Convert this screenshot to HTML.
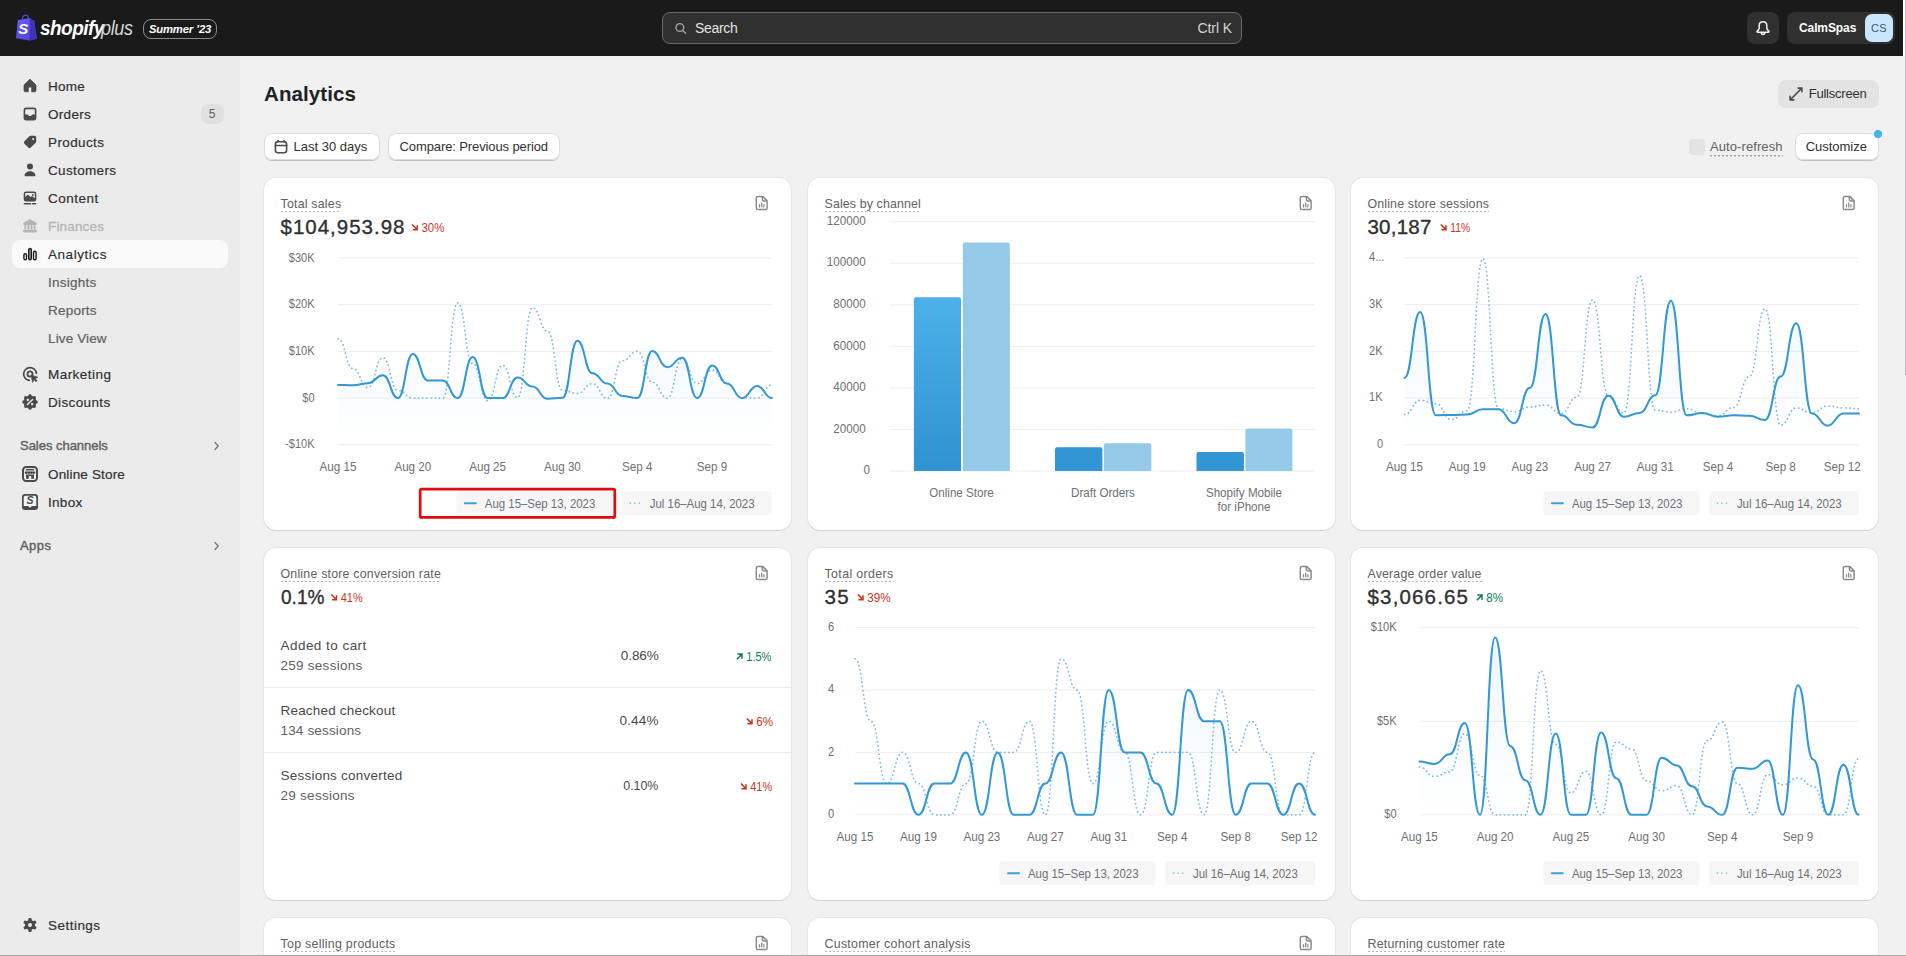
<!DOCTYPE html>
<html lang="en">
<head>
<meta charset="utf-8">
<title>Analytics</title>
<style>
*{box-sizing:border-box;margin:0;padding:0}
html,body{width:1906px;height:956px;overflow:hidden;background:#f1f1f1}
body{font-family:"Liberation Sans",Arial,sans-serif;color:#303030;font-size:14px;position:relative;-webkit-font-smoothing:antialiased}
#top{position:absolute;left:0;top:0;width:1903px;height:56px;background:#1a1a1a}
#side{position:absolute;left:0;top:56px;width:240px;height:900px;background:#ebebeb}
#sb1{position:absolute;left:1903px;top:0;width:3px;height:56px;background:#fff}
#sb2{position:absolute;left:1904.6px;top:0;width:1.4px;height:375px;background:#bdbdbd}
#bline{position:absolute;left:0;top:954.600px;width:1906px;height:1.400px;background:#a6a6a6}
.abs{position:absolute;white-space:nowrap}
/* top bar */
#logo-s{position:absolute;left:40px;top:16px;font-size:21px;font-weight:bold;font-style:italic;color:#fff;line-height:24px;transform-origin:0 50%;transform:scaleX(0.905);letter-spacing:-0.6px}
#logo-p{position:absolute;left:100.8px;top:16px;font-size:21px;font-weight:normal;font-style:italic;color:#d6d6d6;line-height:24px;transform-origin:0 50%;transform:scaleX(0.86);letter-spacing:-0.4px}
#pill{position:absolute;left:143px;top:19px;width:74px;height:20px;border:1px solid #8a8a8a;border-radius:8px;color:#fff;font-size:11.3px;font-weight:bold;font-style:italic;line-height:18px;text-align:center}
#search{position:absolute;left:662px;top:12px;width:580px;height:32px;border:1px solid #6a6a6a;border-radius:8px;background:#303030}
#search .ph{position:absolute;left:32px;top:0;line-height:31px;font-size:14px;color:#e3e3e3}
#search .kb{position:absolute;right:9px;top:0;line-height:30px;font-size:14px;color:#d4d4d4}
#bell{position:absolute;left:1747px;top:12px;width:32px;height:32px;border-radius:8px;background:#303030}
#acct{position:absolute;left:1787px;top:12px;width:108px;height:32px;border-radius:8px;background:#303030}
#acct .nm{position:absolute;left:12px;top:0.3px;line-height:32px;font-size:12px;font-weight:bold;color:#fff;letter-spacing:-0.1px}
#acct .av{position:absolute;left:78px;top:2px;width:28px;height:28px;border-radius:7px;background:#c9e6ff;color:#3d566e;font-size:11px;line-height:29px;text-align:center;letter-spacing:0.3px}
/* sidebar */
.nav{position:absolute;left:48px;font-size:13.5px;font-weight:normal;color:#303030;line-height:21px;white-space:nowrap;-webkit-text-stroke:0.18px #303030}
.nav.sub{color:#616161;-webkit-text-stroke:0.2px #616161}
.nav.dis{color:#b5b5b5;-webkit-text-stroke:0.3px #b5b5b5}
.sec{position:absolute;left:20px;font-size:13px;color:#616161;line-height:20px;-webkit-text-stroke:0.4px #616161}
.nico{position:absolute;left:20px;width:20px;height:20px}
#sel{position:absolute;left:12px;top:184px;width:216px;height:28px;border-radius:8px;background:#fafafa}
#badge{position:absolute;left:200.500px;top:48px;width:23px;height:20px;border-radius:8px;background:#e0e0e0;color:#616161;font-size:12px;line-height:20px;text-align:center}
/* main */
#title{position:absolute;left:264px;top:80px;font-size:20.5px;font-weight:bold;color:#1f2124;line-height:28px;letter-spacing:0.1px}
.btn{position:absolute;height:27px;top:133px;background:#fff;border-radius:8px;box-shadow:0 0 0 1px #dedede inset,0 1px 0 0 #c4c4c4;font-size:13px;line-height:27px;color:#303030;white-space:nowrap}
#fs{position:absolute;left:1778px;top:80px;width:101px;height:28px;border-radius:8px;background:#e3e3e3;font-size:13px;line-height:28px;color:#303030}
/* cards */
.card{position:absolute;width:527px;background:#fff;border-radius:12px;box-shadow:0 1px 0 0 #d4d4d4,0 0 0 1px #e6e6e6;overflow:hidden}
.ctitle{position:absolute;left:16.500px;top:16px;font-size:12.4px;line-height:20px;color:#616161;height:18px;white-space:nowrap;background:repeating-linear-gradient(90deg,#b8b8b8 0 2px,transparent 2px 4px) 0 100%/100% 1px no-repeat}
.cval{position:absolute;left:16.500px;top:36px;font-size:20.500px;line-height:26px;color:#303030;white-space:nowrap;-webkit-text-stroke:0.35px #303030}
.ricon{position:absolute;left:488.300px;top:15px;width:20px;height:20px}
.csvg{position:absolute;left:0;top:0}
.ax{font-family:"Liberation Sans",Arial,sans-serif;font-size:12.300px;fill:#6d7175;transform-box:fill-box;transform-origin:50% 50%;transform:scaleX(0.945)}
.ay{font-family:"Liberation Sans",Arial,sans-serif;font-size:12.300px;fill:#6d7175;transform-box:fill-box;transform-origin:100% 50%;transform:scaleX(0.900)}
.ayl{transform-origin:0 50%}
.ayn{transform:scaleX(0.948)}
.axe{transform-origin:100% 50%}
.lg{font-family:"Liberation Sans",Arial,sans-serif;font-size:12.300px;fill:#6d7175;transform-box:fill-box;transform-origin:0 50%;transform:scaleX(0.930)}
.trend{font-family:"Liberation Sans",Arial,sans-serif;font-size:12.300px;font-weight:normal;transform-box:fill-box;transform-origin:0 50%}
.r1{position:absolute;left:16.500px;font-size:13.5px;line-height:20px;color:#4a4a4a;white-space:nowrap;letter-spacing:0.1px}
.r2{position:absolute;left:16.500px;font-size:13.5px;line-height:20px;color:#616161;white-space:nowrap;letter-spacing:0.1px}
.r3{position:absolute;right:132.300px;font-size:13.5px;line-height:20px;color:#4a4a4a;white-space:nowrap}
/*FIT*/#n_home{letter-spacing:0.261px}#n_orders{letter-spacing:0.307px}#n_products{letter-spacing:0.374px}#n_customers{letter-spacing:0.342px}#n_content{letter-spacing:0.501px}#n_finances{letter-spacing:0.160px}#n_analytics{letter-spacing:0.546px}#n_insights{letter-spacing:0.253px}#n_reports{letter-spacing:0.220px}#n_liveview{letter-spacing:0.132px}#n_marketing{letter-spacing:0.452px}#n_discounts{letter-spacing:0.365px}#n_sc{letter-spacing:-0.029px}#n_onlinestore{letter-spacing:0.159px}#n_inbox{letter-spacing:0.292px}#n_apps{letter-spacing:0.420px}#n_settings{letter-spacing:0.474px}#t_search{letter-spacing:-0.312px}#t_kb{letter-spacing:-0.080px}#t_nm{letter-spacing:0.095px}#t_title{letter-spacing:0.105px}#t_fs{letter-spacing:-0.219px}#t_l30{letter-spacing:0.007px}#t_cmp{letter-spacing:-0.110px}#t_ar{letter-spacing:0.087px}#t_cust{letter-spacing:-0.028px}#ct1{letter-spacing:0.205px}#ct2{letter-spacing:0.122px}#ct3{letter-spacing:0.147px}#ct4{letter-spacing:0.197px}#ct5{letter-spacing:0.368px}#ct6{letter-spacing:0.147px}#ct7{letter-spacing:0.278px}#ct8{letter-spacing:0.270px}#ct9{letter-spacing:0.208px}#cv1{letter-spacing:0.998px}#cv3{letter-spacing:0.219px}#cv4{display:inline-block;transform-origin:0 50%;transform:scaleX(0.929)}#cv5{letter-spacing:1.300px}#cv6{letter-spacing:1.162px}#tr1{transform:scaleX(0.930)}#tr2{transform:scaleX(0.835)}#tr3{transform:scaleX(0.889)}#tr4{transform:scaleX(0.892)}#tr5{transform:scaleX(0.945)}#tr6{transform:scaleX(0.889)}#tr7{transform:scaleX(0.954)}#tr8{transform:scaleX(0.945)}#ra0{letter-spacing:0.458px}#rb0{letter-spacing:0.264px}#rc0{letter-spacing:-0.070px}#ra1{letter-spacing:0.191px}#rb1{letter-spacing:0.164px}#rc1{letter-spacing:0.205px}#ra2{letter-spacing:0.228px}#rb2{letter-spacing:0.271px}#rc2{display:inline-block;transform-origin:100% 50%;transform:scaleX(0.914)}#t_pill{letter-spacing:-0.185px}/*ENDFIT*/
</style>
</head>
<body>
<div id="top">
<svg class="abs" style="left:15px;top:14px" width="23" height="27" viewBox="0 0 23 27">
<defs><linearGradient id="bagg" x1="0" y1="0" x2="1" y2="1"><stop offset="0" stop-color="#6a5cff"/><stop offset="1" stop-color="#4a3fd0"/></linearGradient></defs>
<path d="M7.200 5.500c.3-2.300 1.700-4.300 3.600-4.300 1.300 0 2.200 1.100 2.600 2.800" fill="none" stroke="#5548e6" stroke-width="1.200"/>
<path d="M2.800 6.200 14.600 4l1.200.5.900 1.400 2.400.3 2.800 18.600-7.300 1.600L1 24.200z" fill="url(#bagg)"/>
<path d="M14.600 4l1.200.5.900 1.400 2.400.3 2.800 18.600-7.300 1.600z" fill="#3f35bd"/>
<text x="8.300" y="20.200" text-anchor="middle" font-family="Liberation Sans,Arial,sans-serif" font-size="15" font-weight="bold" font-style="italic" fill="#fff">S</text>
</svg>
<span id="logo-s">shopify</span><span id="logo-p">plus</span>
<div id="pill"><span id="t_pill">Summer ’23</span></div>
<div id="search"><svg style="position:absolute;left:10px;top:8px" width="16" height="16" viewBox="0 0 16 16"><circle cx="6.800" cy="6.500" r="3.900" fill="none" stroke="#a3a3a3" stroke-width="1.400"/><path d="M9.800 9.500L12.600 12.300" stroke="#a3a3a3" stroke-width="1.400" stroke-linecap="round"/></svg><span id="t_search" class="ph">Search</span><span id="t_kb" class="kb">Ctrl K</span></div>
<div id="bell"><svg class="abs" style="left:6px;top:6px" width="20" height="20" viewBox="0 0 20 20"><path d="M10 3.800c-2.200 0-3.800 1.700-3.800 3.900v2.300c0 .7-.3 1.400-.8 1.900l-1.200 1.200c-.4.400-.1 1.100.5 1.100h10.600c.6 0 .9-.7.500-1.100l-1.200-1.200c-.5-.5-.8-1.200-.8-1.900V7.700c0-2.200-1.600-3.900-3.800-3.900z" fill="none" stroke="#f3f3f3" stroke-width="1.500" stroke-linejoin="round"/><path d="M8.200 14.600a1.800 1.800 0 0 0 3.600 0" fill="none" stroke="#f3f3f3" stroke-width="1.500"/></svg></div>
<div id="acct"><span id="t_nm" class="nm">CalmSpas</span><span class="av">CS</span></div>
</div>
<div id="sb1"></div><div id="sb2"></div>
<div id="side">
<div id="sel"></div>
<svg class="nico" style="top:20px;left:20px" viewBox="0 0 20 20"><path d="M10 3.200 4.500 8.400a1.700 1.700 0 0 0-.5 1.200v4.700a1.500 1.500 0 0 0 1.500 1.500h2.800v-3.300a1.700 1.700 0 0 1 3.400 0v3.300h2.800a1.500 1.500 0 0 0 1.500-1.500V9.600a1.700 1.700 0 0 0-.5-1.200Z" fill="#4a4a4a" stroke="#4a4a4a" stroke-width="0.800" stroke-linejoin="round"/></svg>
<span id="n_home" class="nav " style="top:20px">Home</span>
<svg class="nico" style="top:48px;left:20px" viewBox="0 0 20 20"><path fill-rule="evenodd" d="M6.200 3.600h7.600a2.600 2.600 0 0 1 2.600 2.600v7.600a2.600 2.600 0 0 1-2.600 2.600H6.200a2.600 2.600 0 0 1-2.600-2.600V6.200a2.600 2.600 0 0 1 2.600-2.600zM5.200 6.400v4h2.300a.9.900 0 0 1 .8.500 1.800 1.800 0 0 0 3.400 0 .9.900 0 0 1 .8-.5h2.300v-4a1.200 1.200 0 0 0-1.200-1.200H6.400a1.200 1.200 0 0 0-1.200 1.200z" fill="#4a4a4a"/></svg>
<span id="n_orders" class="nav " style="top:48px">Orders</span>
<svg class="nico" style="top:76px;left:20px" viewBox="0 0 20 20"><path fill-rule="evenodd" d="M10.6 3.8h4.1a1.5 1.5 0 0 1 1.5 1.5v4.1a1.8 1.8 0 0 1-.53 1.27l-4.9 4.9a1.8 1.8 0 0 1-2.54 0l-3.8-3.8a1.8 1.8 0 0 1 0-2.54l4.9-4.9a1.8 1.8 0 0 1 1.27-.53zM13.1 5.9a1 1 0 1 0 0 2 1 1 0 0 0 0-2z" fill="#4a4a4a"/></svg>
<span id="n_products" class="nav " style="top:76px">Products</span>
<svg class="nico" style="top:104px;left:20px" viewBox="0 0 20 20"><circle cx="10" cy="6.6" r="3" fill="#4a4a4a"/><path d="M4.6 15.6c0-2.6 2.4-4.3 5.4-4.3s5.4 1.7 5.4 4.3a.6.6 0 0 1-.6.6H5.200a.6.6 0 0 1-.6-.6z" fill="#4a4a4a"/></svg>
<span id="n_customers" class="nav " style="top:104px">Customers</span>
<svg class="nico" style="top:132px;left:20px" viewBox="0 0 20 20"><path fill-rule="evenodd" d="M6 3.4h8a2.3 2.3 0 0 1 2.3 2.3v5.6a2.3 2.3 0 0 1-2.3 2.3H6a2.3 2.3 0 0 1-2.3-2.3V5.7A2.300 2.300 0 0 1 6 3.400zM5.200 5.900v3.200l2.100-2.100a.8.8 0 0 1 1.100 0l2.100 2.100.9-.9a.8.800 0 0 1 1.100 0l2.300 2.300V5.900a.9.900 0 0 0-.9-.9H6.100a.9.900 0 0 0-.9.900zM12.800 6a.9.900 0 1 0 0 1.800.9.900 0 0 0 0-1.800z" fill="#4a4a4a"/><path d="M4.400 15.700h6.200M12.700 15.700h2.900" stroke="#4a4a4a" stroke-width="1.500" stroke-linecap="round"/></svg>
<span id="n_content" class="nav " style="top:132px">Content</span>
<svg class="nico" style="top:160px;left:20px" viewBox="0 0 20 20"><path d="M10 3.600 3.800 7.100v1.300h12.400V7.100z" fill="#b5b5b5" stroke="#b5b5b5" stroke-width="1" stroke-linejoin="round"/><path d="M5.400 9v4.400M8.500 9v4.400M11.500 9v4.400M14.600 9v4.400" stroke="#b5b5b5" stroke-width="1.900"/><path d="M4.200 15.100h11.600" stroke="#b5b5b5" stroke-width="2.600" stroke-linecap="round"/></svg>
<span id="n_finances" class="nav dis" style="top:160px">Finances</span>
<svg class="nico" style="top:188px;left:20px" viewBox="0 0 20 20"><rect x="3.900" y="9.700" width="2.600" height="6" rx="1.300" fill="none" stroke="#1a1a1a" stroke-width="1.400"/><rect x="8.700" y="4.500" width="2.600" height="11.200" rx="1.300" fill="#ababab" stroke="#1a1a1a" stroke-width="1.400"/><rect x="13.500" y="7.300" width="2.600" height="8.400" rx="1.300" fill="none" stroke="#1a1a1a" stroke-width="1.400"/></svg>
<span id="n_analytics" class="nav " style="top:188px">Analytics</span>
<span id="n_insights" class="nav sub" style="top:216px">Insights</span>
<span id="n_reports" class="nav sub" style="top:244px">Reports</span>
<span id="n_liveview" class="nav sub" style="top:272px">Live View</span>
<svg class="nico" style="top:308px;left:20px" viewBox="0 0 20 20"><path d="M16.400 9.300A6.400 6.400 0 1 0 9.300 16.400" fill="none" stroke="#4a4a4a" stroke-width="1.700" stroke-linecap="round"/><circle cx="10" cy="10" r="2.600" fill="none" stroke="#4a4a4a" stroke-width="1.800"/><path d="M10.900 10.900l7 2.300-2.700 1.500 1.900 1.900-1.100 1.100-1.900-1.900-1.500 2.700z" fill="#4a4a4a" stroke="#4a4a4a" stroke-width="0.600" stroke-linejoin="round"/></svg>
<span id="n_marketing" class="nav " style="top:308px">Marketing</span>
<svg class="nico" style="top:336px;left:20px" viewBox="0 0 20 20"><path d="M10.00 2.20 L10.30 2.24 L10.60 2.37 L10.88 2.56 L11.14 2.81 L11.38 3.09 L11.59 3.37 L11.79 3.64 L11.99 3.87 L12.19 4.05 L12.41 4.18 L12.65 4.25 L12.93 4.26 L13.23 4.23 L13.56 4.19 L13.92 4.14 L14.28 4.11 L14.64 4.12 L14.97 4.18 L15.27 4.30 L15.52 4.48 L15.70 4.73 L15.82 5.03 L15.88 5.36 L15.89 5.72 L15.86 6.08 L15.81 6.44 L15.77 6.77 L15.74 7.07 L15.75 7.35 L15.82 7.59 L15.95 7.81 L16.13 8.01 L16.36 8.21 L16.63 8.41 L16.91 8.62 L17.19 8.86 L17.44 9.12 L17.63 9.40 L17.76 9.70 L17.80 10.00 L17.76 10.30 L17.63 10.60 L17.44 10.88 L17.19 11.14 L16.91 11.38 L16.63 11.59 L16.36 11.79 L16.13 11.99 L15.95 12.19 L15.82 12.41 L15.75 12.65 L15.74 12.93 L15.77 13.23 L15.81 13.56 L15.86 13.92 L15.89 14.28 L15.88 14.64 L15.82 14.97 L15.70 15.27 L15.52 15.52 L15.27 15.70 L14.97 15.82 L14.64 15.88 L14.28 15.89 L13.92 15.86 L13.56 15.81 L13.23 15.77 L12.93 15.74 L12.65 15.75 L12.41 15.82 L12.19 15.95 L11.99 16.13 L11.79 16.36 L11.59 16.63 L11.38 16.91 L11.14 17.19 L10.88 17.44 L10.60 17.63 L10.30 17.76 L10.00 17.80 L9.70 17.76 L9.40 17.63 L9.12 17.44 L8.86 17.19 L8.62 16.91 L8.41 16.63 L8.21 16.36 L8.01 16.13 L7.81 15.95 L7.59 15.82 L7.35 15.75 L7.07 15.74 L6.77 15.77 L6.44 15.81 L6.08 15.86 L5.72 15.89 L5.36 15.88 L5.03 15.82 L4.73 15.70 L4.48 15.52 L4.30 15.27 L4.18 14.97 L4.12 14.64 L4.11 14.28 L4.14 13.92 L4.19 13.56 L4.23 13.23 L4.26 12.93 L4.25 12.65 L4.18 12.41 L4.05 12.19 L3.87 11.99 L3.64 11.79 L3.37 11.59 L3.09 11.38 L2.81 11.14 L2.56 10.88 L2.37 10.60 L2.24 10.30 L2.20 10.00 L2.24 9.70 L2.37 9.40 L2.56 9.12 L2.81 8.86 L3.09 8.62 L3.37 8.41 L3.64 8.21 L3.87 8.01 L4.05 7.81 L4.18 7.59 L4.25 7.35 L4.26 7.07 L4.23 6.77 L4.19 6.44 L4.14 6.08 L4.11 5.72 L4.12 5.36 L4.18 5.03 L4.30 4.73 L4.48 4.48 L4.73 4.30 L5.03 4.18 L5.36 4.12 L5.72 4.11 L6.08 4.14 L6.44 4.19 L6.77 4.23 L7.07 4.26 L7.35 4.25 L7.59 4.18 L7.81 4.05 L8.01 3.87 L8.21 3.64 L8.41 3.37 L8.62 3.09 L8.86 2.81 L9.12 2.56 L9.40 2.37 L9.70 2.24 Z" fill="#4a4a4a"/><path d="M7.400 12.600l5.200-5.200" stroke="#ebebeb" stroke-width="1.400" stroke-linecap="round"/><rect x="6.800" y="6.800" width="2.100" height="2.100" rx="0.500" fill="#ebebeb"/><rect x="11.100" y="11.100" width="2.100" height="2.100" rx="0.500" fill="#ebebeb"/></svg>
<span id="n_discounts" class="nav " style="top:336px">Discounts</span>
<svg class="nico" style="top:408px;left:20px" viewBox="0 0 20 20"><rect x="3" y="3" width="14" height="14" rx="3.200" fill="#f3f3f3" stroke="#4a4a4a" stroke-width="2"/><path d="M5.800 5.700h8.400" stroke="#4a4a4a" stroke-width="1.600"/><path d="M4.800 7.500h10.400v1.200a1.300 1.300 0 0 1-2.600.100 1.300 1.300 0 0 1-2.600 0 1.300 1.300 0 0 1-2.600 0 1.300 1.300 0 0 1-2.600-.1z" fill="#4a4a4a"/><path d="M6 10.400v4.400h2.800v-2.700h2.400v2.700h2.800v-4.400z" fill="#4a4a4a"/></svg>
<span id="n_onlinestore" class="nav " style="top:408px">Online Store</span>
<svg class="nico" style="top:436px;left:20px" viewBox="0 0 20 20"><path d="M5 2h10a3 3 0 0 1 3 3v10a3 3 0 0 1-3 3H5a3 3 0 0 1-3-3V5a3 3 0 0 1 3-3z" fill="#4a4a4a"/><path d="M5.400 3.700h9.200a1.700 1.700 0 0 1 1.700 1.700v8.500h-4.300L10 15.800 8 13.900H3.700V5.400a1.700 1.700 0 0 1 1.700-1.700z" fill="#f3f3f3"/><text x="9.900" y="12.400" text-anchor="middle" font-family="Liberation Sans,Arial,sans-serif" font-size="10.500" font-weight="bold" font-style="italic" fill="#4a4a4a">S</text></svg>
<span id="n_inbox" class="nav " style="top:436px">Inbox</span>
<svg class="nico" style="top:859px;left:20px" viewBox="0 0 20 20"><g fill="#4a4a4a"><circle cx="10" cy="10" r="5"/><rect x="8.300" y="3" width="3.400" height="5" rx="1.200" transform="rotate(0 10 10)"/><rect x="8.300" y="3" width="3.400" height="5" rx="1.200" transform="rotate(60 10 10)"/><rect x="8.300" y="3" width="3.400" height="5" rx="1.200" transform="rotate(120 10 10)"/><rect x="8.300" y="3" width="3.400" height="5" rx="1.200" transform="rotate(180 10 10)"/><rect x="8.300" y="3" width="3.400" height="5" rx="1.200" transform="rotate(240 10 10)"/><rect x="8.300" y="3" width="3.400" height="5" rx="1.200" transform="rotate(300 10 10)"/></g><circle cx="10" cy="10" r="2" fill="#ebebeb"/></svg>
<span id="n_settings" class="nav " style="top:859px">Settings</span>
<span id="n_sc" class="sec" style="top:380px">Sales channels</span>
<span id="n_apps" class="sec" style="top:480px">Apps</span>
<svg class="abs" style="left:213px;top:385px" width="8" height="10" viewBox="0 0 8 9"><path d="M2 1l3.200 3.500L2 8" fill="none" stroke="#7a7a7a" stroke-width="1.400" stroke-linecap="round" stroke-linejoin="round"/></svg>
<svg class="abs" style="left:213px;top:485px" width="8" height="10" viewBox="0 0 8 9"><path d="M2 1l3.200 3.500L2 8" fill="none" stroke="#7a7a7a" stroke-width="1.400" stroke-linecap="round" stroke-linejoin="round"/></svg>
<div id="badge">5</div>
</div>
<div id="title"><span id="t_title">Analytics</span></div>
<div id="fs"><svg class="abs" style="left:9px;top:5px" width="18" height="18" viewBox="0 0 18 18"><path d="M3.300 14.700 14.700 3.300M11.200 3.100h3.700v3.700M3.100 11.200v3.700h3.700" fill="none" stroke="#4a4a4a" stroke-width="1.600" stroke-linecap="round" stroke-linejoin="round"/></svg><span id="t_fs" class="abs" style="left:30.700px;top:0">Fullscreen</span></div>
<div class="btn" style="left:264px;width:115.500px"><svg class="abs" style="left:8px;top:5px" width="18" height="18" viewBox="0 0 18 18"><rect x="3.400" y="3.700" width="11.200" height="11" rx="2.500" fill="none" stroke="#4a4a4a" stroke-width="1.600"/><path d="M3.400 7.500h11.200M6 2.500v1.200M12 2.500v1.200" stroke="#4a4a4a" stroke-width="1.600" stroke-linecap="round"/></svg><span id="t_l30" class="abs" style="left:29.500px;top:0">Last 30 days</span></div>
<div class="btn" style="left:388px;width:171.500px"><span id="t_cmp" class="abs" style="left:11.600px;top:0">Compare: Previous period</span></div>
<div class="abs" style="left:1689px;top:139px;width:16px;height:16px;border-radius:4px;background:#e3e3e3"></div>
<div class="abs" style="left:1710px;top:138px;font-size:13px;line-height:17px;color:#616161;height:18.500px;background:repeating-linear-gradient(90deg,#a4a4a4 0 2px,transparent 2px 4px) 0 100%/100% 1.500px no-repeat"><span id="t_ar">Auto-refresh</span></div>
<div class="btn" style="left:1794.5px;width:84px"><span id="t_cust" class="abs" style="left:11.200px;top:0">Customize</span></div>
<div class="abs" style="left:1874px;top:130px;width:8px;height:8px;border-radius:4px;background:#45b1f7"></div>
<div class="card" style="left:264px;top:178px;height:352px"><span class="ctitle"><span id="ct1">Total sales</span></span><svg class="ricon" viewBox="0 0 20 20"><path d="M5.900 3.400h4.700l4.500 4.500v7a1.600 1.600 0 0 1-1.600 1.600H5.900a1.600 1.600 0 0 1-1.600-1.600V5a1.600 1.600 0 0 1 1.600-1.600z" fill="none" stroke="#8a8a8a" stroke-width="1.500" stroke-linejoin="round"/><path d="M10.400 3.600v3a1.400 1.400 0 0 0 1.400 1.400h3" fill="none" stroke="#8a8a8a" stroke-width="1.500"/><path d="M7.500 13.900v-2.300M9.700 13.900v-3.700M11.900 13.900v-2.300" stroke="#8a8a8a" stroke-width="1.300" stroke-linecap="round"/></svg><span id="cv1" class="cval">$104,953.98</span><svg class="csvg" width="527" height="352" viewBox="0 0 527 352"><defs><linearGradient id="ga" gradientUnits="userSpaceOnUse" x1="0" y1="80" x2="0" y2="266.8"><stop offset="0" stop-color="#3a9fdb" stop-opacity="0.095"/><stop offset="1" stop-color="#3a9fdb" stop-opacity="0"/></linearGradient></defs><line x1="74" x2="508" y1="80" y2="80" stroke="#eeeeef" stroke-width="1"/><line x1="74" x2="508" y1="126.7" y2="126.7" stroke="#eeeeef" stroke-width="1"/><line x1="74" x2="508" y1="173.4" y2="173.4" stroke="#eeeeef" stroke-width="1"/><line x1="74" x2="508" y1="220.1" y2="220.1" stroke="#eeeeef" stroke-width="1"/><line x1="74" x2="508" y1="266.8" y2="266.8" stroke="#eeeeef" stroke-width="1"/><text class="ay" text-anchor="end" x="50.6" y="83.6">$30K</text><text class="ay" text-anchor="end" x="50.6" y="130.3">$20K</text><text class="ay" text-anchor="end" x="50.6" y="177">$10K</text><text class="ay" text-anchor="end" x="50.6" y="223.7">$0</text><text class="ay" text-anchor="end" x="50.6" y="270.4">-$10K</text><path d="M74,206.93C81.48,206.93 81.48,207.3 88.97,207.3C96.45,207.3 96.45,205.16 103.93,205.16C111.41,205.16 111.41,197.22 118.9,197.22C126.38,197.22 126.38,220.1 133.86,220.1C141.34,220.1 141.34,175.92 148.83,175.92C156.31,175.92 156.31,202.54 163.79,202.54C171.28,202.54 171.28,202.54 178.76,202.54C186.24,202.54 186.24,220.1 193.72,220.1C201.21,220.1 201.21,179 208.69,179C216.17,179 216.17,220.1 223.66,220.1C231.14,220.1 231.14,220.1 238.62,220.1C246.1,220.1 246.1,199.55 253.59,199.55C261.07,199.55 261.07,208.57 268.55,208.57C276.03,208.57 276.03,220.8 283.52,220.8C291,220.8 291,219.87 298.48,219.87C305.97,219.87 305.97,162.66 313.45,162.66C320.93,162.66 320.93,195.35 328.41,195.35C335.9,195.35 335.9,205.62 343.38,205.62C350.86,205.62 350.86,218 358.34,218C365.83,218 365.83,220.01 373.31,220.01C380.79,220.01 380.79,172.93 388.28,172.93C395.76,172.93 395.76,189.28 403.24,189.28C410.72,189.28 410.72,179.7 418.21,179.7C425.69,179.7 425.69,220.1 433.17,220.1C440.66,220.1 440.66,187.41 448.14,187.41C455.62,187.41 455.62,205.62 463.1,205.62C470.59,205.62 470.59,220.1 478.07,220.1C485.55,220.1 485.55,207.96 493.03,207.96C500.52,207.96 500.52,220.1 508,220.1L508,266.8 L74,266.8 Z" fill="url(#ga)" stroke="none"/><path d="M74,160.79C81.48,160.79 81.48,190.68 88.97,190.68C96.45,190.68 96.45,209.59 103.93,209.59C111.41,209.59 111.41,179.7 118.9,179.7C126.38,179.7 126.38,212.3 133.86,212.3C141.34,212.3 141.34,220.1 148.83,220.1C156.31,220.1 156.31,220.1 163.79,220.1C171.28,220.1 171.28,220.1 178.76,220.1C186.24,220.1 186.24,124.83 193.72,124.83C201.21,124.83 201.21,185.54 208.69,185.54C216.17,185.54 216.17,222.67 223.66,222.67C231.14,222.67 231.14,187.41 238.62,187.41C246.1,187.41 246.1,219.63 253.59,219.63C261.07,219.63 261.07,129.5 268.55,129.5C276.03,129.5 276.03,153.32 283.52,153.32C291,153.32 291,212.16 298.48,212.16C305.97,212.16 305.97,215.43 313.45,215.43C320.93,215.43 320.93,205.62 328.41,205.62C335.9,205.62 335.9,220.57 343.38,220.57C350.86,220.57 350.86,182.74 358.34,182.74C365.83,182.74 365.83,173.4 373.31,173.4C380.79,173.4 380.79,204.22 388.28,204.22C395.76,204.22 395.76,220.1 403.24,220.1C410.72,220.1 410.72,180.87 418.21,180.87C425.69,180.87 425.69,205.62 433.17,205.62C440.66,205.62 440.66,192.08 448.14,192.08C455.62,192.08 455.62,205.62 463.1,205.62C470.59,205.62 470.59,220.1 478.07,220.1C485.55,220.1 485.55,220.1 493.03,220.1C500.52,220.1 500.52,207.02 508,207.02" fill="none" stroke="#7fbbe0" stroke-width="1.8" stroke-dasharray="0.1 4.1" stroke-linecap="round"/><path d="M74,206.93C81.48,206.93 81.48,207.3 88.97,207.3C96.45,207.3 96.45,205.16 103.93,205.16C111.41,205.16 111.41,197.22 118.9,197.22C126.38,197.22 126.38,220.1 133.86,220.1C141.34,220.1 141.34,175.92 148.83,175.92C156.31,175.92 156.31,202.54 163.79,202.54C171.28,202.54 171.28,202.54 178.76,202.54C186.24,202.54 186.24,220.1 193.72,220.1C201.21,220.1 201.21,179 208.69,179C216.17,179 216.17,220.1 223.66,220.1C231.14,220.1 231.14,220.1 238.62,220.1C246.1,220.1 246.1,199.55 253.59,199.55C261.07,199.55 261.07,208.57 268.55,208.57C276.03,208.57 276.03,220.8 283.52,220.8C291,220.8 291,219.87 298.48,219.87C305.97,219.87 305.97,162.66 313.45,162.66C320.93,162.66 320.93,195.35 328.41,195.35C335.9,195.35 335.9,205.62 343.38,205.62C350.86,205.62 350.86,218 358.34,218C365.83,218 365.83,220.01 373.31,220.01C380.79,220.01 380.79,172.93 388.28,172.93C395.76,172.93 395.76,189.28 403.24,189.28C410.72,189.28 410.72,179.7 418.21,179.7C425.69,179.7 425.69,220.1 433.17,220.1C440.66,220.1 440.66,187.41 448.14,187.41C455.62,187.41 455.62,205.62 463.1,205.62C470.59,205.62 470.59,220.1 478.07,220.1C485.55,220.1 485.55,207.96 493.03,207.96C500.52,207.96 500.52,220.1 508,220.1" fill="none" stroke="#3398d3" stroke-width="2" stroke-linejoin="round" stroke-linecap="round"/><text class="ax" text-anchor="middle" x="74" y="293.3">Aug 15</text><text class="ax" text-anchor="middle" x="148.8" y="293.3">Aug 20</text><text class="ax" text-anchor="middle" x="223.6" y="293.3">Aug 25</text><text class="ax" text-anchor="middle" x="298.4" y="293.3">Aug 30</text><text class="ax" text-anchor="middle" x="373.2" y="293.3">Sep 4</text><text class="ax" text-anchor="middle" x="448" y="293.3">Sep 9</text><rect x="192.3" y="313.4" width="156" height="23.5" rx="2" fill="#f6f6f7"/><rect x="358.3" y="313.4" width="149.5" height="23.5" rx="2" fill="#f6f6f7"/><line x1="200.8" x2="211.8" y1="325.15" y2="325.15" stroke="#3a9fdb" stroke-width="2" stroke-linecap="round"/><line x1="366.3" x2="378.3" y1="325.15" y2="325.15" stroke="#86bfe0" stroke-width="1.6" stroke-dasharray="0.1 4.4" stroke-linecap="round"/><text class="lg" x="220.8" y="330.15">Aug 15–Sep 13, 2023</text><text class="lg" x="385.8" y="330.15">Jul 16–Aug 14, 2023</text><rect x="156.2" y="311.2" width="194.6" height="28.2" rx="1.5" fill="none" stroke="#e00b0b" stroke-width="2.7"/><g transform="translate(147.7,46.2)"><path d="M0.900 0.900 L5.200 5.200 M1.700 5.500 H5.500 V1.700" fill="none" stroke="#c9341c" stroke-width="1.500" stroke-linecap="square"/></g><text id="tr1" class="trend" x="157.5" y="53.8" fill="#c9341c">30%</text></svg></div>
<div class="card" style="left:808px;top:178px;height:352px"><span class="ctitle"><span id="ct2">Sales by channel</span></span><svg class="ricon" viewBox="0 0 20 20"><path d="M5.900 3.400h4.700l4.500 4.500v7a1.600 1.600 0 0 1-1.600 1.600H5.900a1.600 1.600 0 0 1-1.600-1.600V5a1.600 1.600 0 0 1 1.600-1.600z" fill="none" stroke="#8a8a8a" stroke-width="1.500" stroke-linejoin="round"/><path d="M10.400 3.600v3a1.400 1.400 0 0 0 1.400 1.400h3" fill="none" stroke="#8a8a8a" stroke-width="1.500"/><path d="M7.500 13.900v-2.300M9.700 13.900v-3.700M11.900 13.900v-2.300" stroke="#8a8a8a" stroke-width="1.300" stroke-linecap="round"/></svg><svg class="csvg" width="527" height="352" viewBox="0 0 527 352"><defs><linearGradient id="gb" x1="0" y1="0" x2="0" y2="1"><stop offset="0" stop-color="#4cb1e9"/><stop offset="1" stop-color="#3092d1"/></linearGradient></defs><line x1="82.2" x2="506.7" y1="293" y2="293" stroke="#eeeeef" stroke-width="1"/><line x1="82.2" x2="506.7" y1="251.45" y2="251.45" stroke="#eeeeef" stroke-width="1"/><line x1="82.2" x2="506.7" y1="209.9" y2="209.9" stroke="#eeeeef" stroke-width="1"/><line x1="82.2" x2="506.7" y1="168.35" y2="168.35" stroke="#eeeeef" stroke-width="1"/><line x1="82.2" x2="506.7" y1="126.8" y2="126.8" stroke="#eeeeef" stroke-width="1"/><line x1="82.2" x2="506.7" y1="85.25" y2="85.25" stroke="#eeeeef" stroke-width="1"/><line x1="82.2" x2="506.7" y1="43.7" y2="43.7" stroke="#eeeeef" stroke-width="1"/><text class="ay ayn" text-anchor="end" x="57.7" y="254.65">20000</text><text class="ay ayn" text-anchor="end" x="57.7" y="213.1">40000</text><text class="ay ayn" text-anchor="end" x="57.7" y="171.55">60000</text><text class="ay ayn" text-anchor="end" x="57.7" y="130">80000</text><text class="ay ayn" text-anchor="end" x="57.7" y="88.45">100000</text><text class="ay ayn" text-anchor="end" x="57.7" y="46.9">120000</text><text class="ay ayn" text-anchor="end" x="62.1" y="296.2">0</text><path d="M105.9,293 V121.3 Q105.9,119.3 107.9,119.3 H151 Q153,119.3 153,121.3 V293 Z" fill="url(#gb)"/><path d="M154.8,293 V66.4 Q154.8,64.4 156.8,64.4 H199.8 Q201.8,64.4 201.8,66.4 V293 Z" fill="#95c9e8"/><path d="M247,293 V271.3 Q247,269.3 249,269.3 H292.4 Q294.4,269.3 294.4,271.3 V293 Z" fill="#3295d4"/><path d="M295.9,293 V267.2 Q295.9,265.2 297.9,265.2 H341.3 Q343.3,265.2 343.3,267.2 V293 Z" fill="#95c9e8"/><path d="M388.5,293 V276 Q388.5,274 390.5,274 H433.9 Q435.9,274 435.9,276 V293 Z" fill="#3295d4"/><path d="M437.4,293 V252.4 Q437.4,250.4 439.4,250.4 H482.4 Q484.4,250.4 484.4,252.4 V293 Z" fill="#95c9e8"/><text class="ax" text-anchor="middle" x="153.5" y="318.8">Online Store</text><text class="ax" text-anchor="middle" x="295" y="318.8">Draft Orders</text><text class="ax" text-anchor="middle" x="436" y="318.8">Shopify Mobile</text><text class="ax" text-anchor="middle" x="436" y="332.8">for iPhone</text></svg></div>
<div class="card" style="left:1351px;top:178px;height:352px"><span class="ctitle"><span id="ct3">Online store sessions</span></span><svg class="ricon" viewBox="0 0 20 20"><path d="M5.900 3.400h4.700l4.500 4.500v7a1.600 1.600 0 0 1-1.600 1.600H5.900a1.600 1.600 0 0 1-1.600-1.600V5a1.600 1.600 0 0 1 1.600-1.600z" fill="none" stroke="#8a8a8a" stroke-width="1.500" stroke-linejoin="round"/><path d="M10.400 3.600v3a1.400 1.400 0 0 0 1.400 1.400h3" fill="none" stroke="#8a8a8a" stroke-width="1.500"/><path d="M7.500 13.900v-2.300M9.700 13.900v-3.700M11.900 13.900v-2.300" stroke="#8a8a8a" stroke-width="1.300" stroke-linecap="round"/></svg><span id="cv3" class="cval">30,187</span><svg class="csvg" width="527" height="352" viewBox="0 0 527 352"><defs><linearGradient id="gc" gradientUnits="userSpaceOnUse" x1="0" y1="79.8" x2="0" y2="266.8"><stop offset="0" stop-color="#3a9fdb" stop-opacity="0.095"/><stop offset="1" stop-color="#3a9fdb" stop-opacity="0"/></linearGradient></defs><line x1="53.5" x2="508" y1="79.8" y2="79.8" stroke="#eeeeef" stroke-width="1"/><line x1="53.5" x2="508" y1="126.5" y2="126.5" stroke="#eeeeef" stroke-width="1"/><line x1="53.5" x2="508" y1="173.3" y2="173.3" stroke="#eeeeef" stroke-width="1"/><line x1="53.5" x2="508" y1="220" y2="220" stroke="#eeeeef" stroke-width="1"/><line x1="53.5" x2="508" y1="266.8" y2="266.8" stroke="#eeeeef" stroke-width="1"/><text class="ay ayl" x="18" y="83.2">4...</text><text class="ay ayl" x="18" y="129.9">3K</text><text class="ay ayl" x="18" y="176.7">2K</text><text class="ay ayl" x="18" y="223.4">1K</text><text class="ay ayl" x="26" y="270.2">0</text><path d="M53.5,199.95C61.34,199.95 61.34,134.03 69.17,134.03C77.01,134.03 77.01,237.35 84.84,237.35C92.68,237.35 92.68,236.88 100.52,236.88C108.35,236.88 108.35,236.41 116.19,236.41C124.03,236.41 124.03,231.27 131.86,231.27C139.7,231.27 139.7,231.27 147.53,231.27C155.37,231.27 155.37,245.3 163.21,245.3C171.04,245.3 171.04,209.77 178.88,209.77C186.72,209.77 186.72,135.9 194.55,135.9C202.39,135.9 202.39,237.35 210.22,237.35C218.06,237.35 218.06,246.7 225.9,246.7C233.73,246.7 233.73,249.5 241.57,249.5C249.41,249.5 249.41,217.71 257.24,217.71C265.08,217.71 265.08,238.75 272.91,238.75C280.75,238.75 280.75,235.01 288.59,235.01C296.42,235.01 296.42,217.25 304.26,217.25C312.09,217.25 312.09,122.81 319.93,122.81C327.77,122.81 327.77,237.35 335.6,237.35C343.44,237.35 343.44,235.01 351.28,235.01C359.11,235.01 359.11,238.75 366.95,238.75C374.78,238.75 374.78,237.35 382.62,237.35C390.46,237.35 390.46,237.81 398.29,237.81C406.13,237.81 406.13,242.02 413.97,242.02C421.8,242.02 421.8,198.55 429.64,198.55C437.47,198.55 437.47,145.25 445.31,145.25C453.15,145.25 453.15,235.48 460.98,235.48C468.82,235.48 468.82,247.63 476.66,247.63C484.49,247.63 484.49,235.48 492.33,235.48C500.16,235.48 500.16,235.48 508,235.48L508,266.8 L53.5,266.8 Z" fill="url(#gc)" stroke="none"/><path d="M53.5,236.41C61.34,236.41 61.34,222.39 69.17,222.39C77.01,222.39 77.01,225.66 84.84,225.66C92.68,225.66 92.68,241.56 100.52,241.56C108.35,241.56 108.35,232.67 116.19,232.67C124.03,232.67 124.03,80.74 131.86,80.74C139.7,80.74 139.7,230.8 147.53,230.8C155.37,230.8 155.37,233.61 163.21,233.61C171.04,233.61 171.04,228.93 178.88,228.93C186.72,228.93 186.72,227.06 194.55,227.06C202.39,227.06 202.39,235.48 210.22,235.48C218.06,235.48 218.06,219.12 225.9,219.12C233.73,219.12 233.73,121.88 241.57,121.88C249.41,121.88 249.41,217.25 257.24,217.25C265.08,217.25 265.08,235.01 272.91,235.01C280.75,235.01 280.75,97.56 288.59,97.56C296.42,97.56 296.42,232.21 304.26,232.21C312.09,232.21 312.09,234.08 319.93,234.08C327.77,234.08 327.77,230.8 335.6,230.8C343.44,230.8 343.44,235.48 351.28,235.48C359.11,235.48 359.11,237.81 366.95,237.81C374.78,237.81 374.78,229.4 382.62,229.4C390.46,229.4 390.46,198.55 398.29,198.55C406.13,198.55 406.13,130.76 413.97,130.76C421.8,130.76 421.8,247.17 429.64,247.17C437.47,247.17 437.47,229.87 445.31,229.87C453.15,229.87 453.15,235.01 460.98,235.01C468.82,235.01 468.82,228 476.66,228C484.49,228 484.49,229.87 492.33,229.87C500.16,229.87 500.16,230.8 508,230.8" fill="none" stroke="#7fbbe0" stroke-width="1.8" stroke-dasharray="0.1 4.1" stroke-linecap="round"/><path d="M53.5,199.95C61.34,199.95 61.34,134.03 69.17,134.03C77.01,134.03 77.01,237.35 84.84,237.35C92.68,237.35 92.68,236.88 100.52,236.88C108.35,236.88 108.35,236.41 116.19,236.41C124.03,236.41 124.03,231.27 131.86,231.27C139.7,231.27 139.7,231.27 147.53,231.27C155.37,231.27 155.37,245.3 163.21,245.3C171.04,245.3 171.04,209.77 178.88,209.77C186.72,209.77 186.72,135.9 194.55,135.9C202.39,135.9 202.39,237.35 210.22,237.35C218.06,237.35 218.06,246.7 225.9,246.7C233.73,246.7 233.73,249.5 241.57,249.5C249.41,249.5 249.41,217.71 257.24,217.71C265.08,217.71 265.08,238.75 272.91,238.75C280.75,238.75 280.75,235.01 288.59,235.01C296.42,235.01 296.42,217.25 304.26,217.25C312.09,217.25 312.09,122.81 319.93,122.81C327.77,122.81 327.77,237.35 335.6,237.35C343.44,237.35 343.44,235.01 351.28,235.01C359.11,235.01 359.11,238.75 366.95,238.75C374.78,238.75 374.78,237.35 382.62,237.35C390.46,237.35 390.46,237.81 398.29,237.81C406.13,237.81 406.13,242.02 413.97,242.02C421.8,242.02 421.8,198.55 429.64,198.55C437.47,198.55 437.47,145.25 445.31,145.25C453.15,145.25 453.15,235.48 460.98,235.48C468.82,235.48 468.82,247.63 476.66,247.63C484.49,247.63 484.49,235.48 492.33,235.48C500.16,235.48 500.16,235.48 508,235.48" fill="none" stroke="#3398d3" stroke-width="2" stroke-linejoin="round" stroke-linecap="round"/><text class="ax" text-anchor="middle" x="53.5" y="293.3">Aug 15</text><text class="ax" text-anchor="middle" x="116.19" y="293.3">Aug 19</text><text class="ax" text-anchor="middle" x="178.88" y="293.3">Aug 23</text><text class="ax" text-anchor="middle" x="241.57" y="293.3">Aug 27</text><text class="ax" text-anchor="middle" x="304.26" y="293.3">Aug 31</text><text class="ax" text-anchor="middle" x="366.95" y="293.3">Sep 4</text><text class="ax" text-anchor="middle" x="429.64" y="293.3">Sep 8</text><text class="ax axe" text-anchor="end" x="509.6" y="293.3">Sep 12</text><rect x="192.4" y="313.4" width="156" height="23.5" rx="2" fill="#f6f6f7"/><rect x="358.4" y="313.4" width="149.5" height="23.5" rx="2" fill="#f6f6f7"/><line x1="200.9" x2="211.9" y1="325.15" y2="325.15" stroke="#3a9fdb" stroke-width="2" stroke-linecap="round"/><line x1="366.4" x2="378.4" y1="325.15" y2="325.15" stroke="#86bfe0" stroke-width="1.6" stroke-dasharray="0.1 4.4" stroke-linecap="round"/><text class="lg" x="220.9" y="330.15">Aug 15–Sep 13, 2023</text><text class="lg" x="385.9" y="330.15">Jul 16–Aug 14, 2023</text><g transform="translate(89.5,46.2)"><path d="M0.900 0.900 L5.200 5.200 M1.700 5.500 H5.500 V1.700" fill="none" stroke="#c9341c" stroke-width="1.500" stroke-linecap="square"/></g><text id="tr2" class="trend" x="99.3" y="53.8" fill="#c9341c">11%</text></svg></div>
<div class="card" style="left:264px;top:548px;height:352px"><span class="ctitle"><span id="ct4">Online store conversion rate</span></span><svg class="ricon" viewBox="0 0 20 20"><path d="M5.900 3.400h4.700l4.500 4.500v7a1.600 1.600 0 0 1-1.600 1.600H5.900a1.600 1.600 0 0 1-1.600-1.600V5a1.600 1.600 0 0 1 1.600-1.600z" fill="none" stroke="#8a8a8a" stroke-width="1.500" stroke-linejoin="round"/><path d="M10.400 3.600v3a1.400 1.400 0 0 0 1.400 1.400h3" fill="none" stroke="#8a8a8a" stroke-width="1.500"/><path d="M7.500 13.900v-2.300M9.700 13.900v-3.700M11.900 13.900v-2.300" stroke="#8a8a8a" stroke-width="1.300" stroke-linecap="round"/></svg><span id="cv4" class="cval">0.1%</span><svg class="csvg" width="527" height="352" viewBox="0 0 527 352"><g transform="translate(67,46.2)"><path d="M0.900 0.900 L5.200 5.200 M1.700 5.500 H5.500 V1.700" fill="none" stroke="#c9341c" stroke-width="1.500" stroke-linecap="square"/></g><text id="tr3" class="trend" x="76.8" y="53.8" fill="#c9341c">41%</text><line x1="0" x2="527" y1="139.5" y2="139.5" stroke="#ebebeb"/><line x1="0" x2="527" y1="204.5" y2="204.5" stroke="#ebebeb"/><g transform="translate(472.5,105.2)"><path d="M0.900 5.500 L5.200 1.200 M1.700 0.900 H5.500 V4.700" fill="none" stroke="#0c7a56" stroke-width="1.500" stroke-linecap="square"/></g><text id="tr4" class="trend" x="482.3" y="112.8" fill="#0c7a56">1.5%</text><g transform="translate(482.5,170.2)"><path d="M0.900 0.900 L5.200 5.200 M1.700 5.500 H5.500 V1.700" fill="none" stroke="#c9341c" stroke-width="1.500" stroke-linecap="square"/></g><text id="tr5" class="trend" x="492.3" y="177.8" fill="#c9341c">6%</text><g transform="translate(476.5,235.2)"><path d="M0.900 0.900 L5.200 5.200 M1.700 5.500 H5.500 V1.700" fill="none" stroke="#c9341c" stroke-width="1.500" stroke-linecap="square"/></g><text id="tr6" class="trend" x="486.3" y="242.8" fill="#c9341c">41%</text></svg><span id="ra0" class="r1" style="top:88px">Added to cart</span><span id="rb0" class="r2" style="top:108px">259 sessions</span><span id="rc0" class="r3" style="top:98px">0.86%</span><span id="ra1" class="r1" style="top:153px">Reached checkout</span><span id="rb1" class="r2" style="top:173px">134 sessions</span><span id="rc1" class="r3" style="top:163px">0.44%</span><span id="ra2" class="r1" style="top:218px">Sessions converted</span><span id="rb2" class="r2" style="top:238px">29 sessions</span><span id="rc2" class="r3" style="top:228px">0.10%</span></div>
<div class="card" style="left:808px;top:548px;height:352px"><span class="ctitle"><span id="ct5">Total orders</span></span><svg class="ricon" viewBox="0 0 20 20"><path d="M5.900 3.400h4.700l4.500 4.500v7a1.600 1.600 0 0 1-1.600 1.600H5.900a1.600 1.600 0 0 1-1.600-1.600V5a1.600 1.600 0 0 1 1.600-1.600z" fill="none" stroke="#8a8a8a" stroke-width="1.500" stroke-linejoin="round"/><path d="M10.400 3.600v3a1.400 1.400 0 0 0 1.400 1.400h3" fill="none" stroke="#8a8a8a" stroke-width="1.500"/><path d="M7.500 13.900v-2.300M9.700 13.900v-3.700M11.900 13.900v-2.300" stroke="#8a8a8a" stroke-width="1.300" stroke-linecap="round"/></svg><span id="cv5" class="cval">35</span><svg class="csvg" width="527" height="352" viewBox="0 0 527 352"><defs><linearGradient id="ge" gradientUnits="userSpaceOnUse" x1="0" y1="79.6" x2="0" y2="266.8"><stop offset="0" stop-color="#3a9fdb" stop-opacity="0.095"/><stop offset="1" stop-color="#3a9fdb" stop-opacity="0"/></linearGradient></defs><line x1="47" x2="507" y1="79.6" y2="79.6" stroke="#eeeeef" stroke-width="1"/><line x1="47" x2="507" y1="142" y2="142" stroke="#eeeeef" stroke-width="1"/><line x1="47" x2="507" y1="204.4" y2="204.4" stroke="#eeeeef" stroke-width="1"/><line x1="47" x2="507" y1="266.8" y2="266.8" stroke="#eeeeef" stroke-width="1"/><text class="ay ayl" x="20" y="83">6</text><text class="ay ayl" x="20" y="145.4">4</text><text class="ay ayl" x="20" y="207.8">2</text><text class="ay ayl" x="20" y="270.2">0</text><path d="M47,235.6C54.93,235.6 54.93,235.6 62.86,235.6C70.79,235.6 70.79,235.6 78.72,235.6C86.66,235.6 86.66,235.6 94.59,235.6C102.52,235.6 102.52,266.8 110.45,266.8C118.38,266.8 118.38,235.6 126.31,235.6C134.24,235.6 134.24,235.6 142.17,235.6C150.1,235.6 150.1,204.4 158.03,204.4C165.97,204.4 165.97,266.8 173.9,266.8C181.83,266.8 181.83,204.4 189.76,204.4C197.69,204.4 197.69,266.8 205.62,266.8C213.55,266.8 213.55,266.8 221.48,266.8C229.41,266.8 229.41,235.6 237.34,235.6C245.28,235.6 245.28,204.4 253.21,204.4C261.14,204.4 261.14,266.8 269.07,266.8C277,266.8 277,266.8 284.93,266.8C292.86,266.8 292.86,142 300.79,142C308.72,142 308.72,204.4 316.66,204.4C324.59,204.4 324.59,204.4 332.52,204.4C340.45,204.4 340.45,235.6 348.38,235.6C356.31,235.6 356.31,266.8 364.24,266.8C372.17,266.8 372.17,142 380.1,142C388.03,142 388.03,173.2 395.97,173.2C403.9,173.2 403.9,173.2 411.83,173.2C419.76,173.2 419.76,266.8 427.69,266.8C435.62,266.8 435.62,235.6 443.55,235.6C451.48,235.6 451.48,235.6 459.41,235.6C467.34,235.6 467.34,266.8 475.28,266.8C483.21,266.8 483.21,235.6 491.14,235.6C499.07,235.6 499.07,266.8 507,266.8L507,266.8 L47,266.8 Z" fill="url(#ge)" stroke="none"/><path d="M47,110.8C54.93,110.8 54.93,173.2 62.86,173.2C70.79,173.2 70.79,235.6 78.72,235.6C86.66,235.6 86.66,204.4 94.59,204.4C102.52,204.4 102.52,235.6 110.45,235.6C118.38,235.6 118.38,266.8 126.31,266.8C134.24,266.8 134.24,266.8 142.17,266.8C150.1,266.8 150.1,235.6 158.03,235.6C165.97,235.6 165.97,173.2 173.9,173.2C181.83,173.2 181.83,204.4 189.76,204.4C197.69,204.4 197.69,204.4 205.62,204.4C213.55,204.4 213.55,173.2 221.48,173.2C229.41,173.2 229.41,266.8 237.34,266.8C245.28,266.8 245.28,110.8 253.21,110.8C261.14,110.8 261.14,142 269.07,142C277,142 277,235.6 284.93,235.6C292.86,235.6 292.86,173.2 300.79,173.2C308.72,173.2 308.72,204.4 316.66,204.4C324.59,204.4 324.59,266.8 332.52,266.8C340.45,266.8 340.45,204.4 348.38,204.4C356.31,204.4 356.31,204.4 364.24,204.4C372.17,204.4 372.17,204.4 380.1,204.4C388.03,204.4 388.03,266.8 395.97,266.8C403.9,266.8 403.9,142 411.83,142C419.76,142 419.76,204.4 427.69,204.4C435.62,204.4 435.62,173.2 443.55,173.2C451.48,173.2 451.48,204.4 459.41,204.4C467.34,204.4 467.34,266.8 475.28,266.8C483.21,266.8 483.21,266.8 491.14,266.8C499.07,266.8 499.07,204.4 507,204.4" fill="none" stroke="#7fbbe0" stroke-width="1.8" stroke-dasharray="0.1 4.1" stroke-linecap="round"/><path d="M47,235.6C54.93,235.6 54.93,235.6 62.86,235.6C70.79,235.6 70.79,235.6 78.72,235.6C86.66,235.6 86.66,235.6 94.59,235.6C102.52,235.6 102.52,266.8 110.45,266.8C118.38,266.8 118.38,235.6 126.31,235.6C134.24,235.6 134.24,235.6 142.17,235.6C150.1,235.6 150.1,204.4 158.03,204.4C165.97,204.4 165.97,266.8 173.9,266.8C181.83,266.8 181.83,204.4 189.76,204.4C197.69,204.4 197.69,266.8 205.62,266.8C213.55,266.8 213.55,266.8 221.48,266.8C229.41,266.8 229.41,235.6 237.34,235.6C245.28,235.6 245.28,204.4 253.21,204.4C261.14,204.4 261.14,266.8 269.07,266.8C277,266.8 277,266.8 284.93,266.8C292.86,266.8 292.86,142 300.79,142C308.72,142 308.72,204.4 316.66,204.4C324.59,204.4 324.59,204.4 332.52,204.4C340.45,204.4 340.45,235.6 348.38,235.6C356.31,235.6 356.31,266.8 364.24,266.8C372.17,266.8 372.17,142 380.1,142C388.03,142 388.03,173.2 395.97,173.2C403.9,173.2 403.9,173.2 411.83,173.2C419.76,173.2 419.76,266.8 427.69,266.8C435.62,266.8 435.62,235.6 443.55,235.6C451.48,235.6 451.48,235.6 459.41,235.6C467.34,235.6 467.34,266.8 475.28,266.8C483.21,266.8 483.21,235.6 491.14,235.6C499.07,235.6 499.07,266.8 507,266.8" fill="none" stroke="#3398d3" stroke-width="2" stroke-linejoin="round" stroke-linecap="round"/><text class="ax" text-anchor="middle" x="47" y="293.3">Aug 15</text><text class="ax" text-anchor="middle" x="110.45" y="293.3">Aug 19</text><text class="ax" text-anchor="middle" x="173.9" y="293.3">Aug 23</text><text class="ax" text-anchor="middle" x="237.34" y="293.3">Aug 27</text><text class="ax" text-anchor="middle" x="300.79" y="293.3">Aug 31</text><text class="ax" text-anchor="middle" x="364.24" y="293.3">Sep 4</text><text class="ax" text-anchor="middle" x="427.69" y="293.3">Sep 8</text><text class="ax axe" text-anchor="end" x="509.5" y="293.3">Sep 12</text><rect x="191.5" y="313.4" width="156" height="23.5" rx="2" fill="#f6f6f7"/><rect x="357.5" y="313.4" width="149.5" height="23.5" rx="2" fill="#f6f6f7"/><line x1="200" x2="211" y1="325.15" y2="325.15" stroke="#3a9fdb" stroke-width="2" stroke-linecap="round"/><line x1="365.5" x2="377.5" y1="325.15" y2="325.15" stroke="#86bfe0" stroke-width="1.6" stroke-dasharray="0.1 4.4" stroke-linecap="round"/><text class="lg" x="220" y="330.15">Aug 15–Sep 13, 2023</text><text class="lg" x="385" y="330.15">Jul 16–Aug 14, 2023</text><g transform="translate(49.5,46.2)"><path d="M0.900 0.900 L5.200 5.200 M1.700 5.500 H5.500 V1.700" fill="none" stroke="#c9341c" stroke-width="1.500" stroke-linecap="square"/></g><text id="tr7" class="trend" x="59.3" y="53.8" fill="#c9341c">39%</text></svg></div>
<div class="card" style="left:1351px;top:548px;height:352px"><span class="ctitle"><span id="ct6">Average order value</span></span><svg class="ricon" viewBox="0 0 20 20"><path d="M5.900 3.400h4.700l4.500 4.500v7a1.600 1.600 0 0 1-1.600 1.600H5.900a1.600 1.600 0 0 1-1.600-1.600V5a1.600 1.600 0 0 1 1.600-1.600z" fill="none" stroke="#8a8a8a" stroke-width="1.500" stroke-linejoin="round"/><path d="M10.400 3.600v3a1.400 1.400 0 0 0 1.400 1.400h3" fill="none" stroke="#8a8a8a" stroke-width="1.500"/><path d="M7.500 13.900v-2.300M9.700 13.900v-3.700M11.900 13.900v-2.300" stroke="#8a8a8a" stroke-width="1.300" stroke-linecap="round"/></svg><span id="cv6" class="cval">$3,066.65</span><svg class="csvg" width="527" height="352" viewBox="0 0 527 352"><defs><linearGradient id="gf" gradientUnits="userSpaceOnUse" x1="0" y1="79.7" x2="0" y2="266.8"><stop offset="0" stop-color="#3a9fdb" stop-opacity="0.095"/><stop offset="1" stop-color="#3a9fdb" stop-opacity="0"/></linearGradient></defs><line x1="68.4" x2="508" y1="79.7" y2="79.7" stroke="#eeeeef" stroke-width="1"/><line x1="68.4" x2="508" y1="173.3" y2="173.3" stroke="#eeeeef" stroke-width="1"/><line x1="68.4" x2="508" y1="266.8" y2="266.8" stroke="#eeeeef" stroke-width="1"/><text class="ay" text-anchor="end" x="45.6" y="83.3">$10K</text><text class="ay" text-anchor="end" x="45.6" y="176.9">$5K</text><text class="ay" text-anchor="end" x="45.6" y="270.4">$0</text><path d="M68.4,213.48C75.97,213.48 75.97,215.91 83.54,215.91C91.12,215.91 91.12,206.37 98.69,206.37C106.26,206.37 106.26,175.12 113.83,175.12C121.41,175.12 121.41,266.8 128.98,266.8C136.55,266.8 136.55,89.43 144.12,89.43C151.7,89.43 151.7,198.13 159.27,198.13C166.84,198.13 166.84,232.19 174.41,232.19C181.99,232.19 181.99,266.8 189.56,266.8C197.13,266.8 197.13,185.6 204.7,185.6C212.28,185.6 212.28,266.8 219.85,266.8C227.42,266.8 227.42,266.8 234.99,266.8C242.57,266.8 242.57,184.48 250.14,184.48C257.71,184.48 257.71,230.13 265.28,230.13C272.86,230.13 272.86,266.8 280.43,266.8C288,266.8 288,266.8 295.57,266.8C303.14,266.8 303.14,209.73 310.72,209.73C318.29,209.73 318.29,217.41 325.86,217.41C333.43,217.41 333.43,238.17 341.01,238.17C348.58,238.17 348.58,258.38 356.15,258.38C363.72,258.38 363.72,266.8 371.3,266.8C378.87,266.8 378.87,219.65 386.44,219.65C394.01,219.65 394.01,220.77 401.59,220.77C409.16,220.77 409.16,212.54 416.73,212.54C424.3,212.54 424.3,266.8 431.88,266.8C439.45,266.8 439.45,137.33 447.02,137.33C454.59,137.33 454.59,211.42 462.17,211.42C469.74,211.42 469.74,266.8 477.31,266.8C484.88,266.8 484.88,216.66 492.46,216.66C500.03,216.66 500.03,266.8 507.6,266.8L507.6,266.8 L68.4,266.8 Z" fill="url(#gf)" stroke="none"/><path d="M68.4,219.09C75.97,219.09 75.97,228.44 83.54,228.44C91.12,228.44 91.12,223.95 98.69,223.95C106.26,223.95 106.26,185.6 113.83,185.6C121.41,185.6 121.41,227.51 128.98,227.51C136.55,227.51 136.55,266.8 144.12,266.8C151.7,266.8 151.7,266.8 159.27,266.8C166.84,266.8 166.84,266.8 174.41,266.8C181.99,266.8 181.99,122.92 189.56,122.92C197.13,122.92 197.13,196.45 204.7,196.45C212.28,196.45 212.28,244.91 219.85,244.91C227.42,244.91 227.42,223.39 234.99,223.39C242.57,223.39 242.57,266.8 250.14,266.8C257.71,266.8 257.71,193.83 265.28,193.83C272.86,193.83 272.86,200.94 280.43,200.94C288,200.94 288,232.75 295.57,232.75C303.14,232.75 303.14,242.66 310.72,242.66C318.29,242.66 318.29,237.8 325.86,237.8C333.43,237.8 333.43,266.8 341.01,266.8C348.58,266.8 348.58,192.52 356.15,192.52C363.72,192.52 363.72,174 371.3,174C378.87,174 378.87,235.55 386.44,235.55C394.01,235.55 394.01,266.8 401.59,266.8C409.16,266.8 409.16,226.57 416.73,226.57C424.3,226.57 424.3,236.86 431.88,236.86C439.45,236.86 439.45,229.94 447.02,229.94C454.59,229.94 454.59,238.17 462.17,238.17C469.74,238.17 469.74,266.8 477.31,266.8C484.88,266.8 484.88,266.8 492.46,266.8C500.03,266.8 500.03,210.67 507.6,210.67" fill="none" stroke="#7fbbe0" stroke-width="1.8" stroke-dasharray="0.1 4.1" stroke-linecap="round"/><path d="M68.4,213.48C75.97,213.48 75.97,215.91 83.54,215.91C91.12,215.91 91.12,206.37 98.69,206.37C106.26,206.37 106.26,175.12 113.83,175.12C121.41,175.12 121.41,266.8 128.98,266.8C136.55,266.8 136.55,89.43 144.12,89.43C151.7,89.43 151.7,198.13 159.27,198.13C166.84,198.13 166.84,232.19 174.41,232.19C181.99,232.19 181.99,266.8 189.56,266.8C197.13,266.8 197.13,185.6 204.7,185.6C212.28,185.6 212.28,266.8 219.85,266.8C227.42,266.8 227.42,266.8 234.99,266.8C242.57,266.8 242.57,184.48 250.14,184.48C257.71,184.48 257.71,230.13 265.28,230.13C272.86,230.13 272.86,266.8 280.43,266.8C288,266.8 288,266.8 295.57,266.8C303.14,266.8 303.14,209.73 310.72,209.73C318.29,209.73 318.29,217.41 325.86,217.41C333.43,217.41 333.43,238.17 341.01,238.17C348.58,238.17 348.58,258.38 356.15,258.38C363.72,258.38 363.72,266.8 371.3,266.8C378.87,266.8 378.87,219.65 386.44,219.65C394.01,219.65 394.01,220.77 401.59,220.77C409.16,220.77 409.16,212.54 416.73,212.54C424.3,212.54 424.3,266.8 431.88,266.8C439.45,266.8 439.45,137.33 447.02,137.33C454.59,137.33 454.59,211.42 462.17,211.42C469.74,211.42 469.74,266.8 477.31,266.8C484.88,266.8 484.88,216.66 492.46,216.66C500.03,216.66 500.03,266.8 507.6,266.8" fill="none" stroke="#3398d3" stroke-width="2" stroke-linejoin="round" stroke-linecap="round"/><text class="ax" text-anchor="middle" x="68.4" y="293.3">Aug 15</text><text class="ax" text-anchor="middle" x="144.12" y="293.3">Aug 20</text><text class="ax" text-anchor="middle" x="219.85" y="293.3">Aug 25</text><text class="ax" text-anchor="middle" x="295.57" y="293.3">Aug 30</text><text class="ax" text-anchor="middle" x="371.3" y="293.3">Sep 4</text><text class="ax" text-anchor="middle" x="447.02" y="293.3">Sep 9</text><rect x="192.4" y="313.4" width="156" height="23.5" rx="2" fill="#f6f6f7"/><rect x="358.4" y="313.4" width="149.5" height="23.5" rx="2" fill="#f6f6f7"/><line x1="200.9" x2="211.9" y1="325.15" y2="325.15" stroke="#3a9fdb" stroke-width="2" stroke-linecap="round"/><line x1="366.4" x2="378.4" y1="325.15" y2="325.15" stroke="#86bfe0" stroke-width="1.6" stroke-dasharray="0.1 4.4" stroke-linecap="round"/><text class="lg" x="220.9" y="330.15">Aug 15–Sep 13, 2023</text><text class="lg" x="385.9" y="330.15">Jul 16–Aug 14, 2023</text><g transform="translate(125.5,46.2)"><path d="M0.900 5.500 L5.200 1.200 M1.700 0.900 H5.500 V4.700" fill="none" stroke="#0c7a56" stroke-width="1.500" stroke-linecap="square"/></g><text id="tr8" class="trend" x="135.3" y="53.8" fill="#0c7a56">8%</text></svg></div>
<div class="card" style="left:264px;top:918px;height:60px"><span class="ctitle"><span id="ct7">Top selling products</span></span><svg class="ricon" viewBox="0 0 20 20"><path d="M5.900 3.400h4.700l4.500 4.500v7a1.600 1.600 0 0 1-1.600 1.600H5.900a1.600 1.600 0 0 1-1.600-1.600V5a1.600 1.600 0 0 1 1.600-1.600z" fill="none" stroke="#8a8a8a" stroke-width="1.500" stroke-linejoin="round"/><path d="M10.400 3.600v3a1.400 1.400 0 0 0 1.400 1.400h3" fill="none" stroke="#8a8a8a" stroke-width="1.500"/><path d="M7.500 13.900v-2.300M9.700 13.900v-3.700M11.900 13.900v-2.300" stroke="#8a8a8a" stroke-width="1.300" stroke-linecap="round"/></svg><svg class="csvg" width="527" height="60" viewBox="0 0 527 60"></svg></div>
<div class="card" style="left:808px;top:918px;height:60px"><span class="ctitle"><span id="ct8">Customer cohort analysis</span></span><svg class="ricon" viewBox="0 0 20 20"><path d="M5.900 3.400h4.700l4.500 4.500v7a1.600 1.600 0 0 1-1.600 1.600H5.900a1.600 1.600 0 0 1-1.600-1.600V5a1.600 1.600 0 0 1 1.600-1.600z" fill="none" stroke="#8a8a8a" stroke-width="1.500" stroke-linejoin="round"/><path d="M10.400 3.600v3a1.400 1.400 0 0 0 1.400 1.400h3" fill="none" stroke="#8a8a8a" stroke-width="1.500"/><path d="M7.500 13.900v-2.300M9.700 13.900v-3.700M11.900 13.900v-2.300" stroke="#8a8a8a" stroke-width="1.300" stroke-linecap="round"/></svg><svg class="csvg" width="527" height="60" viewBox="0 0 527 60"></svg></div>
<div class="card" style="left:1351px;top:918px;height:60px"><span class="ctitle"><span id="ct9">Returning customer rate</span></span><svg class="csvg" width="527" height="60" viewBox="0 0 527 60"></svg></div>
<div id="bline"></div>
</body>
</html>
